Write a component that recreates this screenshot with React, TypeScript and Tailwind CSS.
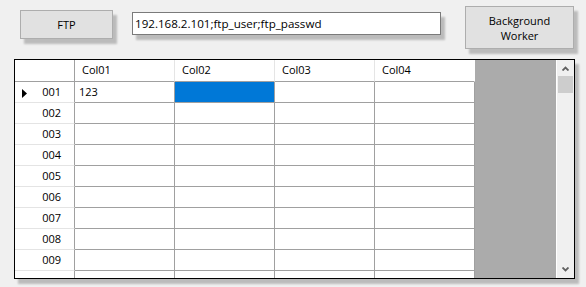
import { ReactNode } from "react";

const cols = ["Col01", "Col02", "Col03", "Col04"];
const rows = ["001", "002", "003", "004", "005", "006", "007", "008", "009", ""];

const WinButton = ({ className, children }: { className: string; children: ReactNode }) => (
  <div
    className={`flex items-center justify-center text-center leading-[15px] bg-[#e1e1e1] border border-[#adadad] shadow-[4px_5px_2px_rgba(0,0,0,0.22)] ${className}`}
  >
    {children}
  </div>
);

const Chevron = ({ down }: { down?: boolean }) => (
  <svg width="7" height="5" viewBox="0 0 7 5" className={down ? "rotate-180" : ""}>
    <path d="M0.5 4.5 L3.5 1.5 L6.5 4.5" fill="none" stroke="#606060" strokeWidth="1.8" />
  </svg>
);

export default function App() {
  return (
    <div className="w-[586px] h-[287px] bg-[#f0f0f0] text-black text-[11px] font-['Open_Sans',sans-serif] overflow-hidden">
      {/* toolbar */}
      <div className="flex items-start h-[59px] pl-[20px]">
        <WinButton className="mt-[10px] w-[93px] h-[29px]">FTP</WinButton>
        <div className="mt-[12px] ml-[19px] w-[309px] h-[23px] bg-white border border-[#7a7a7a] flex items-center pl-[2px] text-[11.6px] shadow-[4px_5px_2px_rgba(0,0,0,0.22)]">
          192.168.2.101;ftp_user;ftp_passwd
        </div>
        <WinButton className="mt-[6px] ml-[24px] w-[109px] h-[43px]">
          Background
          <br />
          Worker
        </WinButton>
      </div>

      {/* data grid */}
      <div className="ml-[14px] w-[561px] h-[220px] border border-black flex bg-[#ababab] shadow-[4px_5px_2px_rgba(0,0,0,0.22)]">
        <div className="w-[460px] h-[218px] overflow-hidden">
          <div className="flex h-[22px] bg-white">
            <div className="w-[60px] border-r border-b border-[#a0a0a0]" />
            {cols.map((c, i) => (
              <div
                key={c}
                className={`w-[100px] border-b border-b-[#a0a0a0] flex items-center pl-[7px] ${
                  i < 3 ? "border-r border-r-[#e5e5e5]" : "border-r border-r-white"
                }`}
              >
                {c}
              </div>
            ))}
          </div>
          {rows.map((r, ri) => (
            <div key={ri} className="flex h-[21px]">
              <div className="w-[60px] bg-white border-r border-r-[#a0a0a0] border-b border-b-[#e4e4e4] flex items-center justify-between pl-[7px] pr-[13px]">
                <span>
                  {ri === 0 && (
                    <svg width="5" height="9" viewBox="0 0 5 9" className="mt-[2px]">
                      <path d="M0 0 L5 4.5 L0 9 Z" fill="#000" />
                    </svg>
                  )}
                </span>
                <span>{r}</span>
              </div>
              {cols.map((c, ci) => (
                <div
                  key={c}
                  className={`w-[100px] border-r border-b border-[#a0a0a0] flex items-center pl-[4px] ${
                    ri === 0 && ci === 1 ? "bg-[#0078d7]" : "bg-white"
                  }`}
                >
                  {ri === 0 && ci === 0 ? "123" : ""}
                </div>
              ))}
            </div>
          ))}
        </div>
        <div className="flex-1" />
        {/* vertical scrollbar */}
        <div className="w-[18px] border-l border-white bg-[#f0f0f0] flex flex-col">
          <div className="h-[16px] flex items-center justify-center">
            <Chevron />
          </div>
          <div className="mx-[1px] h-[17px] bg-[#cdcdcd]" />
          <div className="flex-1" />
          <div className="h-[17px] flex items-center justify-center">
            <Chevron down />
          </div>
        </div>
      </div>
    </div>
  );
}
